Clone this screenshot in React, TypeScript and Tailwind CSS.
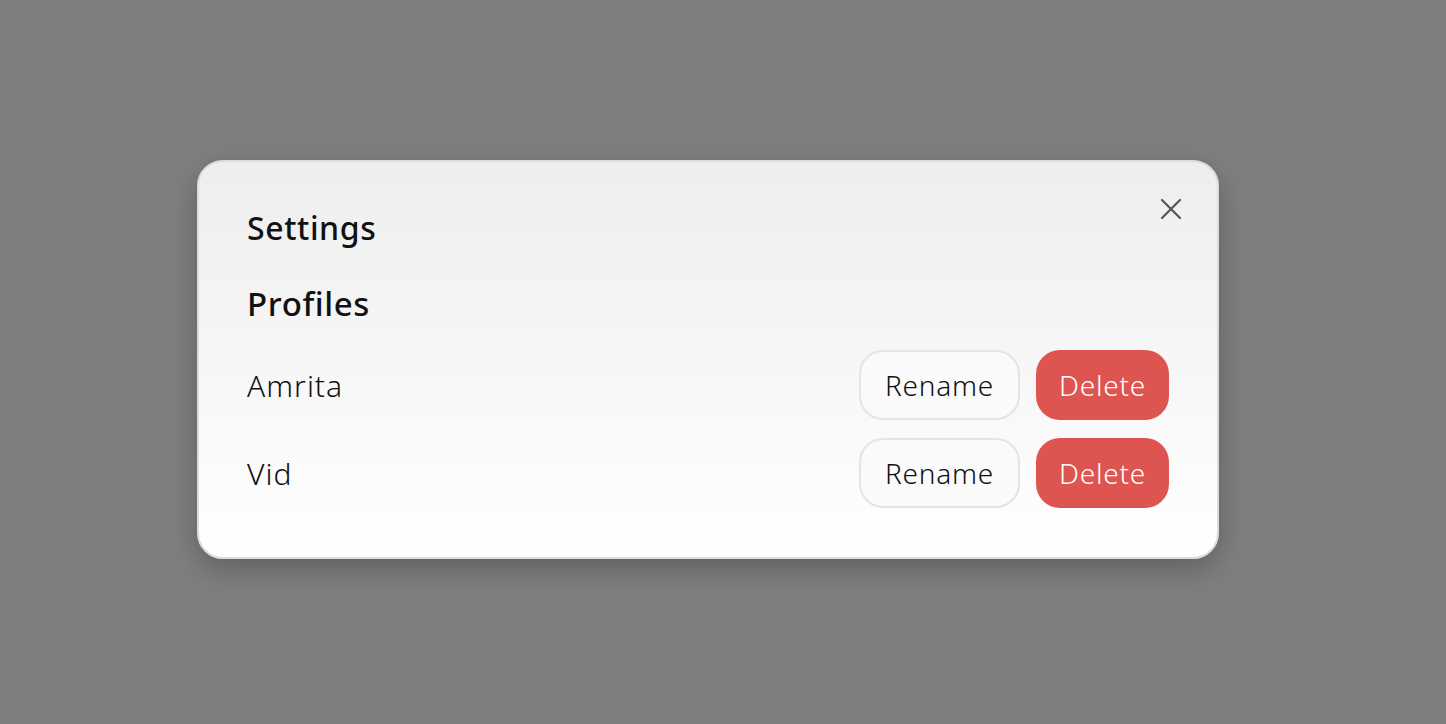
import React from "react";

function CloseIcon() {
  return (
    <svg width="22" height="22" viewBox="0 0 22 22" fill="none" stroke="#555555" strokeWidth="2.2" strokeLinecap="round">
      <path d="M2 2 L20 20 M20 2 L2 20" />
    </svg>
  );
}

function Row({ name }: { name: string }) {
  return (
    <div className="flex items-center justify-between">
      <span className="text-[30px] font-light tracking-[1px] text-[#111]">{name}</span>
      <div className="flex gap-4">
        <button className="h-[70px] w-[161px] rounded-[24px] border-2 border-[#e4e4e4] bg-[#fafafa] text-[28px] font-light tracking-[0.8px] text-[#111]">
          Rename
        </button>
        <button className="h-[70px] w-[133px] rounded-[24px] bg-[#de5450] text-[28px] font-light tracking-[0.8px] text-white">
          Delete
        </button>
      </div>
    </div>
  );
}

export default function App() {
  return (
    <div
      className="min-h-[724px] w-full bg-[#7f7f7f] pl-[197px] pt-[160px]"
      style={{ fontFamily: "'Noto Sans', Lato, sans-serif" }}
    >
      <div className="relative w-[1022px] rounded-[26px] border-2 border-[#dcdcdc] bg-gradient-to-b from-[#eeeeee] to-[#ffffff] px-[48px] pb-[49px] pt-[42px] shadow-[0_10px_30px_rgba(0,0,0,0.25)]">
        <button className="absolute right-[35px] top-[36px]">
          <CloseIcon />
        </button>
        <h2 className="text-[32px] font-medium leading-[48px] tracking-[0.6px] text-[#111]">Settings</h2>
        <h3 className="mt-[30px] text-[33px] font-[550] leading-[44px] tracking-[0.6px] text-[#111]">Profiles</h3>
        <div className="mt-[24px] flex flex-col gap-[18px]">
          <Row name="Amrita" />
          <Row name="Vid" />
        </div>
      </div>
    </div>
  );
}
